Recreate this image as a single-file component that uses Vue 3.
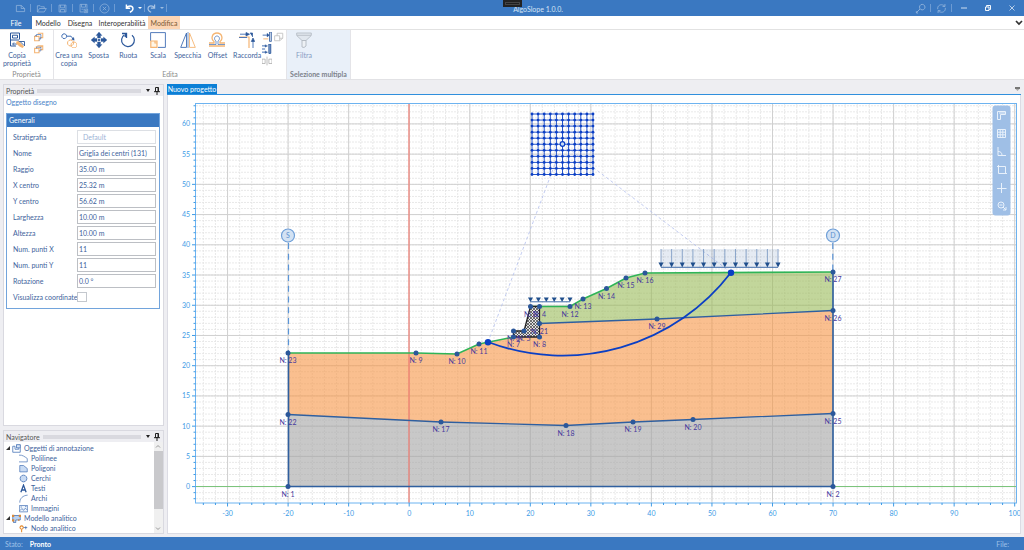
<script setup>
import { h, ref } from 'vue'

const B = '#3f6db3'
const N = '#2b579a'
const O = '#f5b573'
const W = '#ffffff'

// Each shape is [path, stroke, fill, stroke width]
const icons = {
  newDoc: [16, [['M2 12.500V3.500H9L14 8V12.500ZM9 3.500V8H14', W, 'none', 1.1]]],
  open: [16, [['M2 13V4H6L7.500 5.500H12V8M2 13L5 8H15L12 13Z', W, 'none', 1.1]]],
  save: [16, [['M3 3H13V13H3ZM5 3V7H11V3M5 13V9.500H11V13', W, 'none', 1.1]]],
  saveAs: [16, [['M3 2H13V8M3 2V13H8M5 2V6H11V2M5 9H8M9 9H14V14H9ZM10 10L13 13M13 10L10 13', W, 'none', 1.1]]],
  close: [16, [['M8 1.500A6.500 6.500 0 1 0 8.010 1.500ZM5.500 5.500L10.500 10.500M10.500 5.500L5.500 10.500', W, 'none', 1.1]]],
  undo: [16, [['M3.500 2V7.500H9M3.500 7C6 3.500 12 3 13 7.500C13.400 10.500 11 12.500 8.500 13.500', W, 'none', 2.1]]],
  redo: [16, [['M12.500 2V7.500H7M12.500 7C10 3.500 4 3 3 7.500C2.600 10.500 5 12.500 7.500 13.500', W, 'none', 1.8]]],
  key: [16, [['M10.500 2A4 4 0 1 0 10.510 2ZM7.500 8.500L2 14M2 12V14.500H4.500', W, 'none', 1.3]]],
  sync: [16, [['M2.500 9V7C3 2.500 9 1 12.500 4.500M13 1.500V5H9.500M13.500 7V9C13 13.500 7 15 3.500 11.500M3 14.500V11H6.500', W, 'none', 1.2]]],
  min: [16, [['M2 8H14', W, 'none', 1.5]]],
  restore: [16, [['M3 6H10V13H3ZM5 5.500V3H13V11H10.500', W, 'none', 1.9]]],
  exit: [16, [['M3 3L13 13M13 3L3 13', W, 'none', 1.3]]],

  copyProps: [16, [
    ['M1.500 1H10.500V7.500M1.500 1V14H7M3.500 3.200H8.500V6H3.500ZM1.500 8H10', N, 'none', 1],
    ['M4 12H8M5 10.500L3.500 12L5 13.500M9 9.500H15.500V14M11 9.500L15 13.500', N, 'none', .9],
    ['M7.500 9.500L9.500 9L15 14.500L13.500 16L10.500 14.500L7 11.500Z', 'none', O, 0]
  ]],
  front: [16, [
    ['M1 7H8V14H1ZM6 2H14V9H10', O, 'none', 1.7],
    ['M4 7V4H11V10H8M1 7L3 5M8 14L11 10', B, 'none', 1.1]
  ]],
  back: [16, [
    ['M1 7H8V14H1ZM6 3H14V9H10M8 7L14 3M3 5L6 3', O, 'none', 1.7],
    ['M4 7V5H11V11H8', B, 'none', 1]
  ]],
  clone: [16, [
    ['M3.200 1.800A2.400 2.400 0 1 0 3.210 1.800ZM6 4.200H10L12.200 7', B, 'none', 1],
    ['M10.700 7.300L13.200 8.200L12.600 5.500Z', N, N, .5],
    ['M9.500 8A3 3 0 1 0 9.510 8ZM13 10A3 3 0 1 0 13.010 10Z', O, 'none', 1]
  ]],
  move: [16, [
    ['M8 0L11 3.500H9.500V6H6.500V3.500H5ZM8 16L5 12.500H6.500V10H9.500V12.500H11ZM0 8L3.500 5V6.500H6V9.500H3.500V11ZM16 8L12.500 11V9.500H10V6.500H12.500V5Z', N, N, .3],
    ['M8 6.500L9.500 8L8 9.500L6.500 8Z', 'none', N, 0]
  ]],
  rotate: [16, [
    ['M4.500 2.800A6.400 6.400 0 1 0 12 3.200', N, 'none', 1.2],
    ['M2 1.500H6.500V6M6 1.500L5 5', N, 'none', 1.3]
  ]],
  scale: [16, [
    ['M.6 9V.6H15.400V15.400H8', B, 'none', .9],
    ['M.8 9H7V15.300H.8ZM5 9V11H7', O, '#fff6e6', 1.2]
  ]],
  mirror: [16, [
    ['M6.500 1V15.400H.7Z', B, 'none', .9],
    ['M9.500 1V15.400H15.300Z', O, 'none', .9],
    ['M8 0V16', B, 'none', .7]
  ]],
  offset: [16, [
    ['M0 11H5V9.500C1.500 7 3 1 8 1S14.500 7 11 9.500V11H16M0 14H16', O, 'none', 1.3],
    ['M0 12.500H7V9C4.500 7.500 5.500 4 8 4S11.500 7.500 9 9V12.500H16', B, 'none', .7]
  ]],
  fillet: [16, [
    ['M0 5H10V16', O, 'none', 1.2],
    ['M1 2.200H8M14 16V9M0 5.500H8', B, 'none', .9],
    ['M7 .5L10.500 2.200L7 4ZM14 6L12.300 9.500H15.700ZM11 1H13.500V5', N, N, .7]
  ]],
  trim: [16, [
    ['M1 5H9', B, 'none', 1.5],
    ['M8 2L12 5L8 8Z', N, N, .5],
    ['M12 0H15V15H12Z', N, '#cbd8ec', 1.2],
    ['M2 11H10', O, 'none', 1.5]
  ]],
  extend: [16, [
    ['M0 3H5M0 8H5M0 13H5', B, 'none', 1.6],
    ['M5 1L9 3L5 5ZM5 11L9 13L5 15Z', N, N, .5],
    ['M11 0H14V15H11Z', N, '#8eabd5', 1.5]
  ]],
  split: [16, [['M0 5H5V12H0ZM11 5H16V12H11ZM8 1V15', '#999999', 'none', 1]]],
  cube: [16, [['M1 6H9V14H1ZM5 6V2H14V10H9M9 14L14 10', '#c2c2c2', 'none', 1.4]]],
  filter: [16, [
    ['M.7 1H15.300V3.500L10 8.500H6L.7 3.500ZM1 3.300H15', '#8d949c', '#dde2e8', .8],
    ['M6 8.500H10V14L8 15.500L6 15Z', '#8d949c', '#f0f2f4', .9]
  ]],

  annot: [12, [['M1 3V11H11V1H6V5H8V3M1 3H4V7H9V4', B, 'none', 1], ['M6 1H11V5H6Z', B, '#dce8f8', .8]]],
  polyline: [12, [['M0 1.500C5 1 8 4 11 6V10.500H0', B, 'none', .9]]],
  polygon: [12, [['M1 2H6L11 6V10.500H1Z', B, '#c9dbf3', .9]]],
  circle: [12, [['M6 1.500A4.500 4.500 0 1 0 6.010 1.500Z', B, '#c9dbf3', 1]]],
  textA: [12, [['M2.500 11L6 1.500L9.500 11M3.800 8H8.200', N, 'none', 1.7]]],
  arc: [12, [['M1 11.500C1 6 5 2 11.500 1.500', B, 'none', .9]]],
  image: [12, [['M.5 2H11.500V10.500H.5ZM1 9L4 6L6 8.500L8.500 5.500L11 8M2 4H4M8 3.500H10', B, '#edf4fc', .9]]],
  model: [12, [['M1 2H11V8H5V11.500H2V8H1Z', B, '#bcd2ef', 1], ['M0 1H3V4H0ZM9 1H12V4H9ZM0 7H3V10H0ZM8 7H10V9H8Z', 'none', '#d98b3d', 0]]],
  node: [12, [['M3.500 2.500A2.200 2.200 0 1 0 3.510 2.500ZM3.500 7V11', '#e58a2b', 'none', 1.4], ['M6 4.700H11M9 3V7', B, 'none', 1]]]
}

const Icon = (p) => {
  const [box, shapes] = icons[p.name]
  return h('svg', { viewBox: `0 0 ${box} ${box}`, 'aria-hidden': 'true' },
    shapes.map(([d, stroke, fill, w]) => h('path', { d, stroke, fill, 'stroke-width': w })))
}
Icon.props = ['name']

const quick = ['newDoc', 'open', 'save', 'saveAs', 'close']
const tools = [
  ['clone', 'Crea una copia'], ['move', 'Sposta'], ['rotate', 'Ruota'], ['scale', 'Scala'],
  ['mirror', 'Specchia'], ['offset', 'Offset'], ['fillet', 'Raccorda']
]

const fields = ref([
  { id: 'nome', label: 'Nome', value: 'Griglia dei centri (131)' },
  { id: 'raggio', label: 'Raggio', value: '35.00 m' },
  { id: 'xc', label: 'X centro', value: '25.32 m' },
  { id: 'yc', label: 'Y centro', value: '56.62 m' },
  { id: 'larg', label: 'Larghezza', value: '10.00 m' },
  { id: 'alt', label: 'Altezza', value: '10.00 m' },
  { id: 'npx', label: 'Num. punti X', value: '11' },
  { id: 'npy', label: 'Num. punti Y', value: '11' },
  { id: 'rot', label: 'Rotazione', value: '0.0 °' }
])
const showCoords = ref(false)

const tree = [
  ['annot', 'Oggetti di annotazione', 0], ['polyline', 'Polilinee', 1], ['polygon', 'Poligoni', 1],
  ['circle', 'Cerchi', 1], ['textA', 'Testi', 1], ['arc', 'Archi', 1], ['image', 'Immagini', 1],
  ['model', 'Modello analitico', 0], ['node', 'Nodo analitico', 1]
]

// World to drawing coordinates
const X = (v) => 409.2 + v * 6.055
const Y = (v) => 486.6 - v * 6.045
const range = (a, b, s) => Array.from({ length: Math.floor((b - a) / s) + 1 }, (_, i) => a + i * s)
const xTicks = range(-34, 100, 2)
const yTicks = range(-2, 63, 1)
const xMajor = range(-30, 100, 10)
const yMajor = range(0, 60, 5)

const nodes = [
  [288, 353, 23], [416, 353, 9], [457, 354, 10], [479, 344, 11], [513.5, 337, 7], [513.5, 331, 6],
  [524, 331, 5], [530.5, 306.5, 3], [539.5, 306.5, 4], [539.5, 337, 8], [539.5, 323.5, 21], [570, 306.5, 12],
  [583, 299, 13], [606.5, 288.5, 14], [626, 278, 15], [645, 273, 16], [833, 272, 27], [833, 310.5, 26],
  [657, 319, 29], [833, 413.5, 25], [693, 419.5, 20], [633, 422, 19], [566, 425.5, 18], [441, 422, 17],
  [288, 414.5, 22], [288, 486.5, 1], [833, 486.5, 2]
]
const eleven = range(0, 10, 1)
const loadBig = range(0, 11, 1).map((i) => 661 + i * 10.64)
const loadSmall = range(0, 5, 1).map((i) => 530.5 + i * 7.9)
</script>

<template>
  <div class="app">
    <header class="titlebar">
      <div class="quick">
        <template v-for="q in quick" :key="q">
          <button class="qbtn dim" :aria-label="q"><Icon :name="q" /></button><i class="sep"></i>
        </template>
        <button class="qbtn undo" aria-label="undo"><Icon name="undo" /></button><i class="drop"></i><i class="sep tight"></i>
        <button class="qbtn redo" aria-label="redo"><Icon name="redo" /></button><i class="drop faint"></i><i class="sep tight"></i>
      </div>
      <h1 class="title">AlgoSlope 1.0.0.</h1>
      <div class="winctl">
        <button class="qbtn dim" aria-label="key"><Icon name="key" /></button><i class="sep"></i>
        <button class="qbtn dim" aria-label="sync"><Icon name="sync" /></button><i class="sep"></i>
        <button class="wbtn" aria-label="minimize"><Icon name="min" /></button>
        <button class="wbtn" aria-label="restore"><Icon name="restore" /></button>
        <button class="wbtn" aria-label="exit"><Icon name="exit" /></button>
      </div>
      <span class="notch"></span>
    </header>

    <nav class="tabs">
      <button class="tab file">File</button>
      <button class="tab t1">Modello</button>
      <button class="tab t2">Disegna</button>
      <button class="tab t3">Interoperabilità</button>
      <button class="tab active">Modifica</button>
      <svg class="expand" viewBox="0 0 8 6"><path d="M1 1L4 4L7 1" fill="none" stroke="#333" stroke-width="1.7" /></svg>
    </nav>

    <section class="ribbon">
      <div class="group g-prop">
        <div class="tools">
          <button class="tool wide"><Icon name="copyProps" /><span>Copia proprietà</span></button>
          <div class="minis">
            <button aria-label="front"><Icon name="front" /></button>
            <button aria-label="back"><Icon name="back" /></button>
          </div>
        </div>
        <div class="gname">Proprietà</div>
      </div>
      <div class="group g-edit">
        <div class="tools">
          <div class="row">
            <button v-for="t in tools" :key="t[0]" class="tool"><Icon :name="t[0]" /><span>{{ t[1] }}</span></button>
          </div>
          <div class="minis">
            <button aria-label="trim"><Icon name="trim" /></button>
            <button aria-label="extend"><Icon name="extend" /></button>
            <button aria-label="split"><Icon name="split" /></button>
          </div>
          <div class="minis"><button aria-label="cube"><Icon name="cube" /></button></div>
        </div>
        <div class="gname">Edita</div>
      </div>
      <div class="group g-sel">
        <div class="tools"><button class="tool wide faded" disabled><Icon name="filter" /><span>Filtra</span></button></div>
        <div class="gname strong">Selezione multipla</div>
      </div>
    </section>

    <main class="work">
      <aside class="side">
        <section class="panel props">
          <header class="phead"><h2>Proprietà</h2><i class="grip"></i><i class="caret"></i>
            <svg class="pin" viewBox="0 0 6 8"><path d="M1.500 .5H4.500V4.500H1.500ZM0 4.700H6M3 5V8M4 .5V4" fill="none" stroke="#222" /></svg>
          </header>
          <div class="pbody">
            <p class="object">Oggetto disegno</p>
            <form class="box" @submit.prevent>
              <h3>Generali</h3>
              <div class="field">
                <label for="strat">Stratigrafia</label>
                <select id="strat" disabled><option>Default</option></select>
              </div>
              <div v-for="f in fields" :key="f.id" class="field">
                <label :for="f.id">{{ f.label }}</label><input :id="f.id" v-model="f.value" type="text">
              </div>
              <div class="field">
                <label for="coord">Visualizza coordinate</label><input id="coord" v-model="showCoords" type="checkbox">
              </div>
            </form>
          </div>
        </section>

        <section class="panel navi">
          <header class="phead"><h2>Navigatore</h2><i class="grip"></i><i class="caret"></i>
            <svg class="pin" viewBox="0 0 6 8"><path d="M1.500 .5H4.500V4.500H1.500ZM0 4.700H6M3 5V8M4 .5V4" fill="none" stroke="#222" /></svg>
          </header>
          <div class="nbody">
            <ul class="tree">
              <li v-for="t in tree" :key="t[1]" :class="{ child: t[2] }">
                <i v-if="!t[2]" class="twist"></i><Icon :name="t[0]" /><span>{{ t[1] }}</span>
              </li>
            </ul>
            <div class="scroll">
              <svg viewBox="0 0 8 8"><path d="M2 5L4 3L6 5" fill="none" stroke="#999" /></svg>
              <i class="thumb"></i>
              <svg viewBox="0 0 8 8"><path d="M2 3L4 5L6 3" fill="none" stroke="#999" /></svg>
            </div>
          </div>
        </section>
      </aside>

      <section class="doc">
        <div class="dtabs"><button class="dtab">Nuovo progetto</button><i class="more"></i></div>
        <div class="canvas">
          <svg class="plot" viewBox="168 95 852 438">
            <defs>
              <clipPath id="area"><rect x="196" y="103" width="820" height="400" /></clipPath>
              <pattern id="hatch" width="3" height="3" patternUnits="userSpaceOnUse">
                <rect width="3" height="3" fill="#e4e4e4" /><path d="M0 0L3 3M3 0L0 3" stroke="#222" stroke-width=".6" />
              </pattern>
            </defs>
            <g clip-path="url(#area)">
              <g class="minor">
                <path v-for="v in xTicks" :key="'a' + v" :d="`M${X(v)} 103V503`" />
                <path v-for="v in yTicks" :key="'b' + v" :d="`M196 ${Y(v)}H1016`" />
              </g>
              <g class="major">
                <path v-for="v in xMajor" :key="'c' + v" :d="`M${X(v)} 103V503`" />
                <path v-for="v in yMajor" :key="'d' + v" :d="`M196 ${Y(v)}H1016`" />
              </g>
              <path class="axis-y" d="M196 486.500H1016" />
            </g>

            <g opacity=".6">
              <path fill="#a5a5a5" d="M288 414.500L441 422L566 425.500L633 422L693 419.500L833 413.500V486.500H288Z" />
              <path fill="#f79646" d="M288 353H416L457 354L479 344L513.500 337H539.500V323.500L657 319L833 310.500V413.500L693 419.500L633 422L566 425.500L441 422L288 414.500Z" />
              <path fill="#9bbb59" d="M539.500 306.500H570L583 299L606.500 288.500L626 278L645 273L833 272V310.500L657 319L539.500 323.500Z" />
            </g>
            <line class="axis-x" x1="409" y1="103" x2="409" y2="503" />

            <g fill="none" stroke="#2f5f9f" stroke-width="1.300">
              <path d="M288 414.500L441 422L566 425.500L633 422L693 419.500L833 413.500M539.500 323.500L657 319L833 310.500" />
              <path d="M288.500 353V486.500H833V272" stroke-width="1.600" />
            </g>
            <path class="ground" d="M288 353H416L457 354L479 344L513.500 337M530.500 306.500H570L583 299L606.500 288.500L626 278L645 273L833 272" />
            <path d="M530.500 306.500H539.500V337H513.500V331H524Z" fill="url(#hatch)" stroke="#222" stroke-width="1.300" />

            <g stroke="#5b95d8" stroke-width="1.200" stroke-dasharray="6 4.700">
              <path d="M288.500 243V353M832.800 243V272" />
            </g>
            <g v-for="m in [[288, 'S'], [833, 'D']]" :key="m[1]">
              <circle :cx="m[0]" cy="235.500" r="6.500" fill="#d3e2f3" stroke="#6f9fd8" stroke-width="1.200" />
              <text class="mark" :x="m[0]" y="238">{{ m[1] }}</text>
            </g>

            <path d="M562.500 144L488 342M562.500 144L731 272.500" stroke="#b3bfee" stroke-width=".8" stroke-dasharray="3 2.500" />
            <g stroke="#0b3fc4" stroke-width=".9">
              <path v-for="i in eleven" :key="i" :d="`M${532 + i * 6.1} 114V174.500M532 ${114 + i * 6.05}H593`" />
            </g>
            <g fill="#0b3fc4">
              <template v-for="i in eleven" :key="i">
                <circle v-for="j in eleven" :key="j" :cx="532 + i * 6.1" :cy="114 + j * 6.05" r="1.400" />
              </template>
            </g>
            <circle cx="562.500" cy="144" r="2.300" fill="#c7dcf5" stroke="#0b3fc4" stroke-width="1.200" />

            <rect x="661" y="249" width="117" height="18" fill="#2b579a" opacity=".12" />
            <g stroke="#7f9cc4" stroke-width=".9">
              <path v-for="x in loadBig" :key="x" :d="`M${x} 249V265`" />
            </g>
            <g fill="#1f4e8c">
              <path v-for="x in loadBig" :key="x" :d="`M${x - 2.5} 262.500H${x + 2.5}L${x} 267.500Z`" />
              <path v-for="x in loadSmall" :key="x" :d="`M${x - 2.5} 297.500H${x + 2.5}L${x} 302Z`" />
            </g>
            <path d="M661 267.300H778M530.500 301.800H570" stroke="#3f6ba8" />

            <g class="nlabels">
              <text v-for="n in nodes" :key="n[2]" :x="n[0]" :y="n[1] + 10">N: {{ n[2] }}</text>
            </g>
            <g fill="#2b579a">
              <circle v-for="n in nodes" :key="n[2]" :cx="n[0]" :cy="n[1]" r="2.500" />
            </g>
            <path d="M488 342A212 212 0 0 0 731 272.500" fill="none" stroke="#0b3fc4" stroke-width="1.800" />
            <g fill="#0b3fc4"><circle cx="488" cy="342.200" r="3.200" /><circle cx="731" cy="272.700" r="3.200" /></g>

            <rect x="195.500" y="103.500" width="821" height="399.500" fill="none" stroke="#6db3f0" />
            <g stroke="#3d9be6">
              <path v-for="v in xTicks" :key="v" :d="`M${X(v)} 503V${v % 10 ? 505 : 506.500}`" />
              <path v-for="v in yTicks" :key="'y' + v" :d="`M195.500 ${Y(v)}H${v % 5 ? 193.500 : 192}`" />
            </g>
            <g class="axis">
              <text v-for="v in xMajor" :key="v" :x="X(v)" y="516" text-anchor="middle">{{ v }}</text>
              <text v-for="v in yMajor" :key="'y' + v" x="190" :y="Y(v) + 2.5" text-anchor="end">{{ v }}</text>
            </g>

            <rect x="992.500" y="105.500" width="18" height="110" rx="3" fill="#9fbfe6" />
            <g fill="none" stroke="#e8f1fb" stroke-width="1">
              <path d="M997.500 119.500V111.500H1005.500V114.500H1000.500V119.500ZM999 113H1005" />
              <path d="M997.500 129.500H1005.500V137.500H997.500ZM1000.200 129.500V137.500M1002.800 129.500V137.500M997.500 132.200H1005.500M997.500 134.800H1005.500" />
              <path d="M998 147V155.500H1006M998 151.500C1001 151.500 1002 153 1002 155.500" />
              <path d="M998.500 166.500H1005.500V173.500H998.500ZM997 166.500H1000M998.500 165V168M1005 173.500H1007" />
              <path d="M1001.500 183V193M997 188.500H1006.500" />
              <circle cx="1001" cy="205" r="3" /><path d="M999.500 205H1002.500M1003 207L1006 210M1003 210H1006V207" />
            </g>
          </svg>
        </div>
      </section>
    </main>

    <footer class="status"><span>Stato:</span><strong>Pronto</strong><span class="right">File:</span></footer>
  </div>
</template>

<style>
html, body { margin: 0; background: #eeeef2; }
</style>

<style scoped>
.app { height: 100vh; display: flex; flex-direction: column; overflow: hidden; background: #eeeef2; font: 7px/8px Lato, "Open Sans", sans-serif; color: #41639c; }
.app * { box-sizing: border-box; }
button, input, select { font: inherit; color: inherit; margin: 0; padding: 0; border: 0; background: none; border-radius: 0; }
h1, h2, h3, p, ul { margin: 0; padding: 0; font: inherit; }
svg { display: block; fill: none; }

.titlebar { position: relative; height: 16px; flex: none; display: flex; align-items: center; background: #3a78c1; color: #d5e4f5; }
.quick { display: flex; align-items: center; width: 167px; padding-left: 15px; }
.qbtn { width: 11px; height: 11px; flex: none; }
.qbtn svg { width: 100%; height: 100%; }
.dim { opacity: .45; }
.sep { width: 1px; height: 8px; background: #6d9bd3; margin: 0 5px 0 4px; flex: none; }
.sep.tight { margin: 0 1px 0 2px; }
.undo { margin-left: 4px; }
.redo { opacity: .55; }
.drop { border: 2px solid transparent; border-top-color: #fff; border-bottom: 0; margin-left: 3px; }
.drop.faint { opacity: .5; }
.title { flex: 1; text-align: center; padding: 1px 0 0; }
.winctl { display: flex; align-items: center; width: 115px; padding-left: 6px; }
.wbtn { width: 8px; height: 8px; margin: 0 12px 0 3px; flex: none; }
.wbtn + .wbtn { margin-left: 4px; }
.wbtn svg { width: 100%; height: 100%; }
.notch { position: absolute; left: 49.1%; top: 0; width: 19px; height: 7px; background: #1f1f1f; border: 2px solid #222; box-shadow: inset 0 0 0 1px #444; }

.tabs { height: 14px; flex: none; display: flex; background: #fff; border-bottom: 1px solid #e2e2e2; color: #333; }
.tab { text-align: center; height: 13px; }
.file { width: 32px; background: #3a78c1; color: #fff; }
.t1 { width: 32px; }
.t2 { width: 32px; }
.t3 { width: 52px; }
.active { width: 32px; background: #fcd5b4; color: #7a5a35; }
.expand { width: 8px; height: 6px; margin: 4px 1px 0 auto; }

.ribbon { height: 50px; flex: none; display: flex; background: #fff; border-bottom: 1px solid #e2e2e5; }
.group { display: flex; flex-direction: column; justify-content: space-between; padding-top: 2px; border-right: 1px solid #e4e4e8; }
.g-prop { width: 54px; }
.g-edit { width: 233px; }
.g-sel { width: 64px; background: #e9f0f9; }
.tools { display: flex; }
.row { display: flex; width: 208px; }
.tool { flex: 1; min-width: 0; display: flex; flex-direction: column; align-items: center; gap: 3px; }
.tool svg { width: 16px; height: 16px; flex: none; }
.tool span { text-align: center; }
.tool.wide { flex: none; width: 34px; }
.faded { opacity: .6; }
.minis { display: flex; flex-direction: column; gap: 2px; width: 12px; }
.minis button { width: 10px; height: 10px; }
.minis svg { width: 10px; height: 10px; }
.gname { text-align: center; color: #8a8a8a; padding-bottom: 1px; white-space: nowrap; }
.strong { font-weight: 700; color: #7d828a; }

.work { flex: 1; min-height: 0; display: flex; gap: 3px; padding: 4px 3px 3px; }
.side { width: 161px; flex: none; display: flex; flex-direction: column; gap: 4px; }
.panel { background: #fff; border: 1px solid #d9d9e0; display: flex; flex-direction: column; }
.props { flex: 1; min-height: 0; }
.navi { height: 104px; flex: none; }
.phead { height: 11px; flex: none; display: flex; align-items: center; gap: 3px; padding: 0 3px 0 2px; background: #eeeef2; color: #555; }
.grip { flex: 1; height: 4px; background: radial-gradient(circle, #c4c4cb 1px, transparent 1px) 0 0 / 2px 2px; opacity: .5; }
.caret { border: 2px solid transparent; border-top: 3px solid #222; border-bottom: 0; margin: 0 1px 0 2px; }
.pin { width: 6px; height: 8px; }
.pbody { padding: 2px 3px 3px 2px; }
.object { color: #4a83c8; }
.box { margin-top: 7px; border: 1px solid #72a4dc; padding-bottom: 3px; }
.box h3 { height: 13px; line-height: 13px; padding-left: 2px; background: #3a78c1; color: #fff; margin-bottom: 2px; }
.field { display: flex; align-items: center; height: 16px; padding: 0 3px 0 6px; }
.field label { width: 64px; flex: none; white-space: nowrap; }
.field input[type="text"], .field select { flex: 1; min-width: 0; height: 14px; border: 1px solid #bcbfc4; padding: 0 1px; background: #fff; }
.field select { appearance: none; padding-left: 5px; border-color: #dcdfe4; color: #9cb3d6; opacity: 1; }
.field input[type="checkbox"] { appearance: none; width: 10px; height: 10px; border: 1px solid #c4c8ce; background: #fff; }

.nbody { flex: 1; min-height: 0; display: flex; overflow: hidden; }
.tree { flex: 1; list-style: none; padding-top: 1px; display: flex; flex-direction: column; }
.tree li { flex: 1; display: flex; align-items: center; gap: 3px; padding-left: 2px; }
.tree li.child { padding-left: 15px; }
.tree svg { width: 9px; height: 9px; flex: none; }
.twist { border-left: 4px solid transparent; border-bottom: 4px solid #333; margin-right: -1px; }
.scroll { width: 9px; display: flex; flex-direction: column; background: #f0f0f0; }
.scroll svg { width: 8px; height: 9px; }
.thumb { height: 58px; background: #c9c9cc; margin-bottom: auto; }

.doc { flex: 1; min-width: 0; display: flex; flex-direction: column; }
.dtabs { height: 11px; flex: none; display: flex; align-items: center; justify-content: space-between; border-bottom: 1px solid #2f8fdd; }
.dtab { width: 50px; height: 10px; line-height: 9px; background: #0b7fd6; color: #fff; white-space: nowrap; text-align: center; }
.more { width: 5px; height: 4px; margin-right: 1px; background: linear-gradient(#777 0 2px, #aaa 2px); clip-path: polygon(0 0, 100% 0, 100% 40%, 50% 100%, 0 40%); }
.canvas { flex: 1; min-height: 0; background: #fff; border: 1px solid #dcdce4; border-top: 0; }
.plot { width: 100%; height: 100%; }
.minor { stroke: #e3e3e3; stroke-width: .8; stroke-dasharray: 2 1; }
.major { stroke: #d0d0d0; stroke-width: 1; }
.axis-x { stroke: #f07c72; stroke-width: 1.2; }
.axis-y { stroke: #7cc47c; stroke-width: 1; }
.ground { fill: none; stroke: #2fb457; stroke-width: 1.6; }
.nlabels { fill: #46389c; text-anchor: middle; font-size: 7px; }
.axis { fill: #3d9be6; font-size: 7px; }
.mark { fill: #5b90d0; font-size: 7px; text-anchor: middle; }

.status { height: 13px; flex: none; display: flex; align-items: center; gap: 7px; padding: 0 15px 0 5px; background: #3a78c1; color: #9fc1e8; }
.status strong { font-weight: 700; color: #fff; }
.right { margin-left: auto; }
</style>
